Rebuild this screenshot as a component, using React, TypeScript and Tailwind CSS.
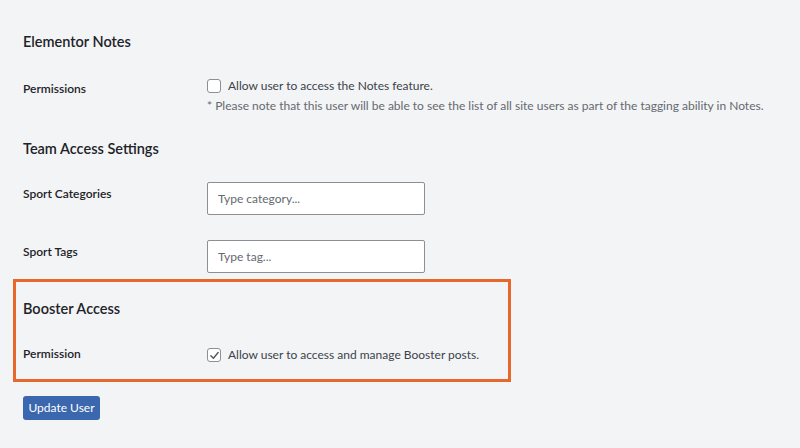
import React from 'react'

const font = { fontFamily: 'Lato, "Open Sans", sans-serif' }

function Checkbox({ checked }: { checked?: boolean }) {
  return (
    <span className="w-[14px] h-[14px] shrink-0 rounded-[3px] border border-[#8c8f94] bg-white flex items-center justify-center">
      {checked && (
        <svg viewBox="0 0 12 12" className="w-[11px] h-[11px]">
          <path d="M2 6.2 L4.8 9 L10 2.8" fill="none" stroke="#50575e" strokeWidth="1.5" strokeLinecap="round" strokeLinejoin="round" />
        </svg>
      )}
    </span>
  )
}

export default function App() {
  return (
    <div className="min-h-screen bg-[#f3f4f6] text-[#1d2327] pl-[23px] pt-[32px] whitespace-nowrap" style={font}>
      {/* Elementor Notes */}
      <h2 className="text-[14.5px] font-semibold leading-[20px]">Elementor Notes</h2>
      <div className="flex mt-[24px]">
        <div className="w-[184px] shrink-0 pt-[3px] text-[12px] font-semibold leading-[20px]">Permissions</div>
        <div className="text-[12px] leading-[20px] text-[#3c434a]">
          <label className="flex items-center gap-[7px]">
            <Checkbox />
            <span>Allow user to access the Notes feature.</span>
          </label>
          <p className="text-[#646970]">* Please note that this user will be able to see the list of all site users as part of the tagging ability in Notes.</p>
        </div>
      </div>

      {/* Team Access Settings */}
      <h2 className="text-[14.5px] font-semibold leading-[20px] mt-[23px]">Team Access Settings</h2>
      <div className="flex mt-[23px]">
        <div className="w-[184px] shrink-0 pt-[2px] text-[12px] font-semibold leading-[20px]">Sport Categories</div>
        <input
          placeholder="Type category..."
          className="w-[218px] h-[33px] bg-white border border-[#8c8f94] rounded-[2px] px-[10px] text-[12px] placeholder:text-[#646970] outline-none"
        />
      </div>
      <div className="flex mt-[25px]">
        <div className="w-[184px] shrink-0 pt-[2px] text-[12px] font-semibold leading-[20px]">Sport Tags</div>
        <input
          placeholder="Type tag..."
          className="w-[218px] h-[33px] bg-white border border-[#8c8f94] rounded-[2px] px-[10px] text-[12px] placeholder:text-[#646970] outline-none"
        />
      </div>

      {/* Booster Access */}
      <div className="ml-[-10px] mt-[6px] w-[498px] border-[3px] border-[#e8682c] pl-[7px] pt-[17px] pb-[14px]">
        <h2 className="text-[14.5px] font-semibold leading-[20px]">Booster Access</h2>
        <div className="flex mt-[25px]">
          <div className="w-[184px] shrink-0 text-[12px] font-semibold leading-[20px]">Permission</div>
          <label className="flex items-center gap-[7px] text-[12px] leading-[20px] text-[#3c434a] pt-[1px]">
            <Checkbox checked />
            <span>Allow user to access and manage Booster posts.</span>
          </label>
        </div>
      </div>

      <button className="mt-[14px] h-[24px] w-[77px] rounded-[3px] bg-[#3a67ae] text-white text-[12px] leading-none">
        Update User
      </button>
    </div>
  )
}
